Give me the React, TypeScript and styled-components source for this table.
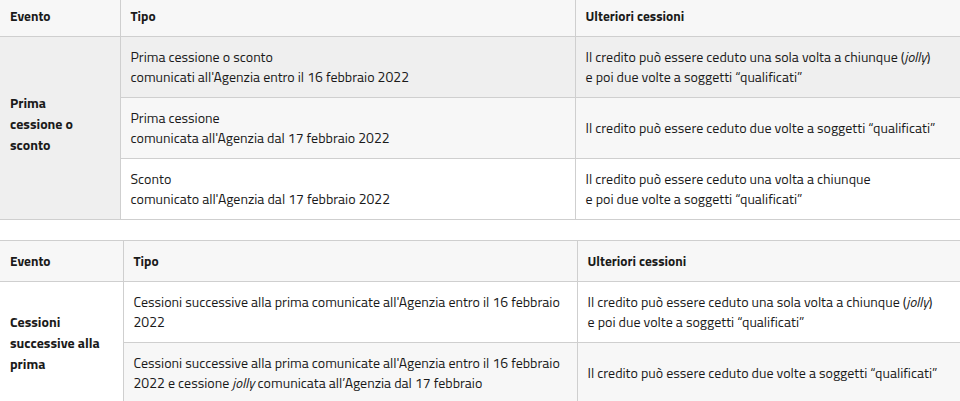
import React, { FC } from 'react';
import styled, { createGlobalStyle } from 'styled-components';

const GlobalStyle = createGlobalStyle`
  *, *::before, *::after {
    box-sizing: border-box;
  }

  body {
    margin: 0;
    background: #fff;
    font-family: 'Titillium Web', Lato, 'Noto Sans', sans-serif;
    color: #1a1a1a;
  }
`;

const Page = styled.div`
  display: flex;
  flex-direction: column;
  gap: 20px;
  margin-top: -5px;
`;

const Table = styled.table`
  width: 960px;
  border-collapse: collapse;
  table-layout: fixed;
  font-size: 14px;
  line-height: 20px;
`;

const HeadCell = styled.th<{ $w: number }>`
  width: ${(p) => p.$w}px;
  background: #f7f7f7;
  border: 1px solid #cfcfcf;
  padding: 10px;
  text-align: left;
  font-weight: 700;
  font-size: 13.5px;
  line-height: 20px;
  color: #1a1a1a;

  &:first-child {
    border-left: none;
  }
  &:last-child {
    border-right: none;
  }
`;

const Row = styled.tr<{ $bg: string }>`
  background: ${(p) => p.$bg};
`;

const EventCell = styled.td<{ $bg: string; $lift?: number }>`
  background: ${(p) => p.$bg};
  border: 1px solid #cfcfcf;
  border-left: none;
  padding: 10px 10px ${(p) => 10 + (p.$lift ?? 0)}px;
  font-weight: 700;
  font-size: 14px;
  line-height: 21px;
  vertical-align: middle;
`;

const Cell = styled.td`
  border: 1px solid #cfcfcf;
  padding: 10px;
  vertical-align: middle;
  font-weight: 400;

  &:last-child {
    border-right: none;
  }
`;

const Header: FC<{ widths: [number, number, number] }> = ({ widths }) => (
  <thead>
    <tr>
      <HeadCell $w={widths[0]}>Evento</HeadCell>
      <HeadCell $w={widths[1]}>Tipo</HeadCell>
      <HeadCell $w={widths[2]}>Ulteriori cessioni</HeadCell>
    </tr>
  </thead>
);

const App: FC = () => {
  return (
    <>
      <GlobalStyle />
      <Page>
        <Table>
          <Header widths={[120, 455, 385]} />
          <tbody>
            <Row $bg="#efefef">
              <EventCell $bg="#efefef" $lift={10} rowSpan={3}>
                Prima
                <br />
                cessione o
                <br />
                sconto
              </EventCell>
              <Cell>
                Prima cessione o sconto
                <br />
                comunicati all'Agenzia entro il 16 febbraio 2022
              </Cell>
              <Cell>
                Il credito può essere ceduto una sola volta a chiunque (<em>jolly</em>)
                <br />e poi due volte a soggetti “qualificati”
              </Cell>
            </Row>
            <Row $bg="#f7f7f7">
              <Cell>
                Prima cessione
                <br />
                comunicata all'Agenzia dal 17 febbraio 2022
              </Cell>
              <Cell>Il credito può essere ceduto due volte a soggetti “qualificati”</Cell>
            </Row>
            <Row $bg="#ffffff">
              <Cell>
                Sconto
                <br />
                comunicato all'Agenzia dal 17 febbraio 2022
              </Cell>
              <Cell>
                Il credito può essere ceduto una volta a chiunque
                <br />e poi due volte a soggetti “qualificati”
              </Cell>
            </Row>
          </tbody>
        </Table>

        <Table>
          <Header widths={[123, 454, 383]} />
          <tbody>
            <Row $bg="#ffffff">
              <EventCell $bg="#ffffff" rowSpan={2}>
                Cessioni
                <br />
                successive alla
                <br />
                prima
              </EventCell>
              <Cell>
                Cessioni successive alla prima comunicate all'Agenzia entro il 16 febbraio
                <br />
                2022
              </Cell>
              <Cell>
                Il credito può essere ceduto una sola volta a chiunque (<em>jolly</em>)
                <br />e poi due volte a soggetti “qualificati”
              </Cell>
            </Row>
            <Row $bg="#f7f7f7">
              <Cell>
                Cessioni successive alla prima comunicate all'Agenzia entro il 16 febbraio
                <br />
                2022 e cessione <em>jolly</em> comunicata all’Agenzia dal 17 febbraio
              </Cell>
              <Cell>Il credito può essere ceduto due volte a soggetti “qualificati”</Cell>
            </Row>
          </tbody>
        </Table>
      </Page>
    </>
  );
};

export default App;
